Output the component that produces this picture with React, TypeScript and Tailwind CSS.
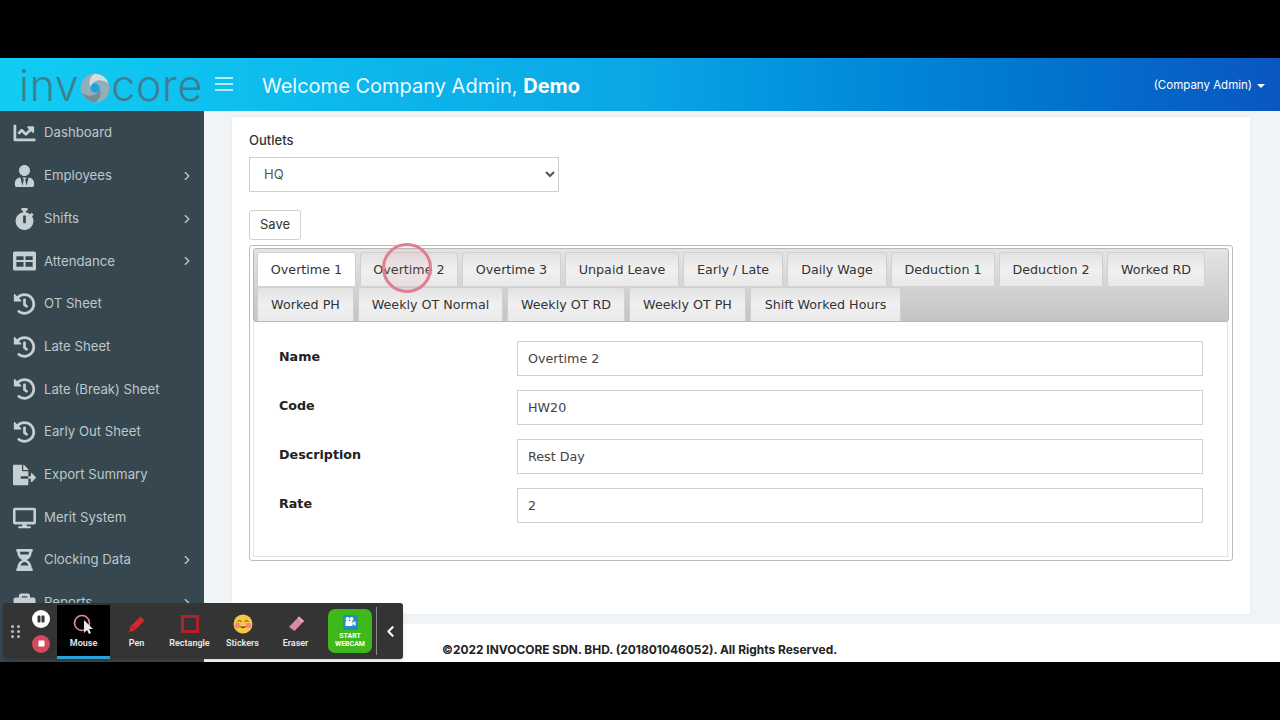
import {
  FaBriefcase,
  FaChartLine,
  FaDesktop,
  FaFileExport,
  FaHistory,
  FaHourglassHalf,
  FaPause,
  FaStop,
  FaStopwatch,
  FaUserTie,
} from "react-icons/fa";
import { FiChevronLeft, FiChevronRight } from "react-icons/fi";

const sansStack = { fontFamily: '"Inter", "Noto Sans", sans-serif' };
const tabStack = { fontFamily: '"DejaVu Sans", sans-serif' };

function TableIcon({ className }: { className?: string }) {
  return (
    <svg viewBox="0 0 24 20" className={className} fill="currentColor">
      <path d="M2 0h20a2 2 0 0 1 2 2v16a2 2 0 0 1-2 2H2a2 2 0 0 1-2-2V2a2 2 0 0 1 2-2zm1.5 5v4h7.5V5zm9.5 0v4h7.5V5zm-9.5 6v5h7.5v-5zm9.5 0v5h7.5v-5z" fillRule="evenodd" />
    </svg>
  );
}

const menu = [
  { label: "Dashboard", icon: FaChartLine },
  { label: "Employees", icon: FaUserTie, more: true },
  { label: "Shifts", icon: FaStopwatch, more: true },
  { label: "Attendance", icon: TableIcon, more: true },
  { label: "OT Sheet", icon: FaHistory },
  { label: "Late Sheet", icon: FaHistory },
  { label: "Late (Break) Sheet", icon: FaHistory },
  { label: "Early Out Sheet", icon: FaHistory },
  { label: "Export Summary", icon: FaFileExport },
  { label: "Merit System", icon: FaDesktop },
  { label: "Clocking Data", icon: FaHourglassHalf, more: true },
  { label: "Reports", icon: FaBriefcase, more: true },
];

const rowOne = [
  { label: "Overtime 1", w: "w-[99px]", active: true },
  { label: "Overtime 2", w: "w-[98px]" },
  { label: "Overtime 3", w: "w-[99px]" },
  { label: "Unpaid Leave", w: "w-[114px]" },
  { label: "Early / Late", w: "w-[100px]" },
  { label: "Daily Wage", w: "w-[100px]" },
  { label: "Deduction 1", w: "w-[104px]" },
  { label: "Deduction 2", w: "w-[104px]" },
  { label: "Worked RD", w: "w-[98px]" },
];

const rowTwo = [
  { label: "Worked PH", w: "w-[97px]" },
  { label: "Weekly OT Normal", w: "w-[145px]" },
  { label: "Weekly OT RD", w: "w-[118px]" },
  { label: "Weekly OT PH", w: "w-[117px]" },
  { label: "Shift Worked Hours", w: "w-[151px]" },
];

const fields = [
  { label: "Name", value: "Overtime 2" },
  { label: "Code", value: "HW20" },
  { label: "Description", value: "Rest Day" },
  { label: "Rate", value: "2" },
];

function Tab({ label, w, active }: { label: string; w: string; active?: boolean }) {
  return (
    <div
      className={`${w} h-[34px] shrink-0 flex items-center justify-center text-[12.7px] text-[#333] rounded-t-[3px] border border-[#d0d0d0] border-b-0 ${
        active ? "bg-white" : "bg-gradient-to-b from-[#e2e2e2] via-[#f0f0f0] to-[#e9e9e9]"
      }`}
    >
      {label}
    </div>
  );
}

function Logo() {
  return (
    <div className="w-[204px] flex items-center pl-[19px] pt-[2px] text-[43px] font-light leading-none tracking-[0.6px] text-[#3f7e91]" style={sansStack}>
      <span>inv</span>
      <svg width="30" height="30" viewBox="0 0 28 28" className="mx-[1px] mt-[5px] shrink-0">
        <circle cx="14" cy="14" r="13.5" fill="#93aeb8" />
        <path d="M14 .6a13.4 13.4 0 0 1 12.6 9.6c-3-3-7-4.2-11-3-3 1-5 3-6 6-2-5 0-10.400 4.400-12.600z" fill="#d3dde0" />
        <path d="M14 27.400A13.400 13.400 0 0 1 1.400 17.800c3 3 7 4.200 11 3 3-1 5-3 6-6 2 5 0 10.400-4.400 12.600z" fill="#6f8f9b" />
        <circle cx="14" cy="14" r="4.200" fill="#1ba3e0" />
      </svg>
      <span>core</span>
    </div>
  );
}

function Sidebar() {
  return (
    <aside className="w-[204px] shrink-0 bg-[#37474f] overflow-hidden pt-[1px]" style={sansStack}>
      {menu.map((item) => {
        const Icon = item.icon;
        return (
          <div key={item.label} className="h-[42.7px] flex items-center pl-[13px] pr-[10px] text-[13.2px] text-[#bcc8cc]">
            <Icon className="w-[23px] h-[22px] shrink-0 text-[#c5d0d4]" />
            <span className="ml-[8px] flex-1">{item.label}</span>
            {item.more && <FiChevronRight className="w-[14px] h-[14px] text-[#c5d0d4]" />}
          </div>
        );
      })}
    </aside>
  );
}

function Recorder() {
  const itemLabel = "text-[9px] font-semibold text-[#e8e8e8] leading-[11px]";
  const itemBox = "w-[53px] flex flex-col items-center justify-end pb-[10px]";
  return (
    <div className="absolute left-[3px] top-[603px] w-[400px] h-[56px] bg-[#343434] rounded-[3px] flex items-stretch shadow-md" style={{ fontFamily: '"Roboto", sans-serif' }}>
      <div className="w-[24px] flex items-center justify-center">
        <div className="grid grid-cols-2 gap-x-[3px] gap-y-[2px]">
          {[0, 1, 2, 3, 4, 5].map((dot) => (
            <span key={dot} className="w-[3px] h-[3px] rounded-full bg-[#bbbbbb]" />
          ))}
        </div>
      </div>
      <div className="w-[28px] mr-[2px] flex flex-col items-center justify-center gap-[7px]">
        <span className="w-[18px] h-[18px] rounded-full bg-white flex items-center justify-center">
          <FaPause className="w-[8px] h-[8px] text-[#333]" />
        </span>
        <span className="w-[18px] h-[18px] rounded-full bg-[#d4495c] flex items-center justify-center">
          <FaStop className="w-[7px] h-[7px] text-white" />
        </span>
      </div>
      <div className="w-[53px] mt-[2px] bg-black border-b-[3px] border-[#2a9fd8] flex flex-col items-center justify-end pb-[7px]">
        <svg width="24" height="24" viewBox="0 0 24 24" className="mb-[2px]">
          <circle cx="10" cy="11" r="7.500" fill="none" stroke="#e88a98" strokeWidth="1.600" />
          <path d="M12 8l0 13 3-3 2 4 2-1-2-4 4 0z" fill="#e8e8e8" />
        </svg>
        <span className={itemLabel}>Mouse</span>
      </div>
      <div className={itemBox}>
        <svg width="20" height="20" viewBox="0 0 20 20" className="mb-[4px]">
          <path d="M13.500 2.500l4 4-10 10-5.500 1.500 1.500-5.500z" fill="#d8262f" />
          <path d="M5 12.500l2.500 2.500" stroke="#343434" strokeWidth="1" />
        </svg>
        <span className={itemLabel}>Pen</span>
      </div>
      <div className={itemBox}>
        <span className="w-[18px] h-[18px] border-[3px] border-[#b3202b] mb-[5px]" />
        <span className={itemLabel}>Rectangle</span>
      </div>
      <div className={itemBox}>
        <svg width="20" height="20" viewBox="0 0 20 20" className="mb-[4px]">
          <circle cx="10" cy="10" r="9.500" fill="#f7c845" />
          <circle cx="4.500" cy="11.500" r="2.800" fill="#ef8a7e" />
          <circle cx="15.500" cy="11.500" r="2.800" fill="#ef8a7e" />
          <path d="M4.500 7.500q2-2 4 0M11.500 7.500q2-2 4 0" fill="none" stroke="#6b4310" strokeWidth="1" />
          <path d="M6.500 12.500q3.500 3.500 7 0z" fill="#6b4310" />
        </svg>
        <span className={itemLabel}>Stickers</span>
      </div>
      <div className={itemBox}>
        <svg width="20" height="20" viewBox="0 0 20 20" className="mb-[4px]">
          <path d="M13 2.500l5 4.500-9.500 10-5.500-4z" fill="#d98aa4" />
          <path d="M13 2.500l5 4.500-1.500 1.600-5-4.500z" fill="#e8a9bc" />
        </svg>
        <span className={itemLabel}>Eraser</span>
      </div>
      <div className="w-[44px] h-[44px] self-center ml-[6px] rounded-[7px] bg-[#3fb81c] flex flex-col items-center justify-center">
        <span className="w-[15px] h-[15px] bg-[#1d8fc4] flex items-center justify-center">
          <svg width="12" height="12" viewBox="0 0 12 12" fill="white">
            <circle cx="3.500" cy="3" r="2" />
            <circle cx="7.500" cy="3" r="2" />
            <rect x="1.500" y="5" width="7" height="5" rx="0.500" />
            <path d="M8.500 7l3-2v5l-3-2z" />
          </svg>
        </span>
        <span className="text-[7px] leading-[8px] font-bold text-white text-center mt-[2px]">
          START
          <br />
          WEBCAM
        </span>
      </div>
      <div className="w-px h-[48px] self-center bg-[#8a8a8a] ml-[4px]" />
      <div className="flex-1 flex items-center justify-center">
        <FiChevronLeft className="w-[17px] h-[17px] text-white" strokeWidth={3} />
      </div>
    </div>
  );
}

export default function App() {
  return (
    <div className="relative w-[1280px] h-[720px] bg-black overflow-hidden flex flex-col pt-[58px] pb-[58px]">
      <header className="h-[53px] shrink-0 flex items-center bg-gradient-to-r from-[#12cdf3] via-[#0ba6e6] to-[#0a56c0] text-white" style={sansStack}>
        <Logo />
        <svg width="20" height="16" viewBox="0 0 20 16" className="ml-[10px] mb-[2px]">
          <path d="M1 2h18M1 8h18M1 14h18" stroke="#e6fbff" strokeWidth="1.600" />
        </svg>
        <div className="ml-[28px] pt-[3px] text-[20px] text-[#eafaff]">
          Welcome Company Admin, <b className="font-bold text-white">Demo</b>
        </div>
        <div className="ml-auto pr-[15px] pt-[3px] flex items-center text-[11.5px]">
          (Company Admin)
          <span className="ml-[5px] w-0 h-0 border-x-[4px] border-x-transparent border-t-[4px] border-t-white" />
        </div>
      </header>

      <div className="flex flex-1 min-h-0">
        <Sidebar />
        <main className="flex-1 bg-[#f1f4f6] flex flex-col pt-[6px] min-w-0">
          <section className="ml-[28px] mr-[30px] h-[497px] bg-white px-[17px] pt-[15px] shadow-[0_0_2px_rgba(0,0,0,0.08)]">
            <div className="text-[13px] font-medium text-[#333] leading-[16px]" style={sansStack}>
              Outlets
            </div>
            <select
              defaultValue="HQ"
              className="mt-[9px] w-[310px] h-[35px] pl-[10px] pr-[2px] pb-[1px] border border-[#d0d0d0] bg-white text-[13px] text-[#555]"
              style={sansStack}
            >
              <option>HQ</option>
            </select>
            <button className="mt-[18px] block w-[52px] h-[30px] border border-[#d0d0d0] rounded-[3px] bg-white text-[13px] text-[#333]" style={sansStack}>
              Save
            </button>

            <div className="mt-[5px] w-[984px] h-[316px] border border-[#bdbdbd] rounded-[3px] p-[2px] pr-[3px]" style={tabStack}>
              <div className="h-[74px] ml-[1px] border border-[#b8b8b8] rounded-[3px] bg-gradient-to-b from-[#e4e4e4] to-[#c4c4c4] pt-[3px] pl-[3px] flex flex-col gap-[1px]">
                <div className="flex gap-[4px]">
                  {rowOne.map((tab) => (
                    <Tab key={tab.label} {...tab} />
                  ))}
                </div>
                <div className="flex gap-[4px]">
                  {rowTwo.map((tab) => (
                    <Tab key={tab.label} {...tab} />
                  ))}
                </div>
              </div>
              <div className="mx-[1px] h-[235px] border-x border-b border-[#e4e4e4] pt-[19px] pl-[25px] pr-[24px] flex flex-col gap-[14px]">
                {fields.map((field) => (
                  <div key={field.label} className="flex items-start">
                    <label className="w-[238px] shrink-0 text-[12.7px] font-bold text-[#222] pt-[8px] leading-[16px]">
                      {field.label}
                    </label>
                    <input
                      readOnly
                      value={field.value}
                      className="flex-1 min-w-0 h-[35px] px-[10px] border border-[#d0d0d0] bg-white text-[12.7px] text-[#444]"
                    />
                  </div>
                ))}
              </div>
            </div>
          </section>
          <footer className="mt-[10px] flex-1 bg-white pt-[17px] pl-[238px] text-[11.95px] font-bold text-[#222]" style={sansStack}>
            ©2022 INVOCORE SDN. BHD. (201801046052). All Rights Reserved.
          </footer>
        </main>
      </div>

      <div className="absolute left-[382px] top-[243px] w-[50px] h-[50px] rounded-full border-[3px] border-[#df8090] bg-[#e0808f]/10" />
      <Recorder />
    </div>
  );
}
